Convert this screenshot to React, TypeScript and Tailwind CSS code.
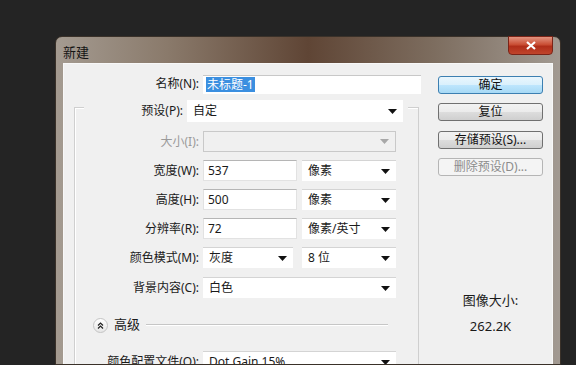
import React from 'react';

const font = "font-['Segoe_UI','Noto_Sans','Noto_Sans_CJK_SC',sans-serif]";

const Arrow = ({ disabled = false }: { disabled?: boolean }) => (
  <svg width="9" height="5" viewBox="0 0 9 5" className="shrink-0">
    <path d="M0 0h9L4.5 5z" fill={disabled ? '#a8a8a8' : '#111'} />
  </svg>
);

const Select = ({ value, w, disabled = false }: { value: string; w: string; disabled?: boolean }) => (
  <div
    className={`${w} h-[21px] flex items-center justify-between pl-[6px] pr-[6px] ${
      disabled
        ? 'bg-[#f0f0f0] border border-[#c9c9c9]'
        : 'bg-white border-t border-[#d4d4d4]'
    }`}
  >
    <span className="text-[12px] text-[#1a1a1a]">{value}</span>
    <Arrow disabled={disabled} />
  </div>
);

const Input = ({ value, w }: { value: string; w: string }) => (
  <div className={`${w} h-[21px] flex items-center pl-[4px] bg-white border border-[#e2e2e2] border-t-[#b5b5b5]`}>
    <span className="text-[12px] text-[#1a1a1a]">{value}</span>
  </div>
);

const Row = ({ label, children, mt, gap = 'gap-[5px]', disabled = false }: { label: string; children: React.ReactNode; mt: string; gap?: string; disabled?: boolean }) => (
  <div className={`${mt} flex items-center h-[21px]`}>
    <div className={`w-[124px] text-right text-[12px] ${disabled ? 'text-[#9a9a9a]' : 'text-[#1a1a1a]'}`}>{label}</div>
    <div className={`ml-[4px] flex ${gap}`}>{children}</div>
  </div>
);

const Btn = ({ label, kind = 'normal', mt }: { label: string; kind?: 'default' | 'normal' | 'disabled'; mt: string }) => {
  const cls =
    kind === 'default'
      ? 'border-[#3c7fb1] bg-[linear-gradient(#eaf6fd,#d9f0fc_50%,#bee6fd_50%,#a7d9f5)] text-[#111]'
      : kind === 'disabled'
      ? 'border-[#b5b5b5] bg-[#f4f4f4] text-[#8c8c8c]'
      : 'border-[#707070] bg-[linear-gradient(#f2f2f2,#ebebeb_50%,#dddddd_50%,#cfcfcf)] text-[#111]';
  return (
    <div className={`${mt} w-[105px] h-[18px] rounded-[3px] border flex items-center justify-center text-[12px] ${cls}`}>
      {label}
    </div>
  );
};

export default function App() {
  return (
    <div className={`w-[576px] h-[365px] overflow-hidden bg-[#242424] pt-[36px] pl-[55px] ${font}`}>
      <div className="w-[506px] h-[329px] rounded-t-[7px] border border-[#3a3129] bg-[linear-gradient(90deg,#a49b91_0%,#8a7a6b_22%,#5f4535_50%,#7d6d5f_75%,#a29a92_100%)] flex flex-col">
        {/* title bar */}
        <div className="h-[26px] flex justify-between shrink-0">
          <span className="ml-[7px] mt-[6px] text-[13px] text-[#151515]">新建</span>
          <div className="mr-[7px] -mt-px w-[45px] h-[19px] rounded-b-[4px] border border-[#7a2418] bg-[linear-gradient(#e39480,#c94d33_45%,#b02e19_55%,#c0452c)] flex items-center justify-center">
            <svg width="10" height="9" viewBox="0 0 10 9">
              <path d="M1 1l8 7M9 1L1 8" stroke="#fff" strokeWidth="2.2" />
            </svg>
          </div>
        </div>

        {/* content */}
        <div className="mx-[7px] flex-1 bg-[#f0f0f0] border-t border-l border-r border-[#f8f8f8] flex overflow-hidden">
          {/* left */}
          <div className="w-[362px]">
            <div className="mt-[11px] flex items-center h-[18px]">
              <div className="w-[135px] text-right text-[12px] text-[#1a1a1a]">名称(N):</div>
              <div className="ml-[4px] w-[218px] h-[19px] flex items-center pl-[3px] bg-white border-t border-[#c8c8c8]">
                <span className="text-[12px] bg-[#3b8fe0] text-white px-[1px] leading-[15px]">未标题-1</span>
              </div>
            </div>

            <div className="mt-[14px] ml-[10px] w-[345px] h-[300px] border border-[#cfcfcf] shadow-[inset_1px_1px_0_#fff]">
              <div className="-mt-[8px] ml-[9px] w-[324px] h-[22px] bg-[#f0f0f0] flex items-center">
                <div className="w-[99px] text-right text-[12px] text-[#1a1a1a]">预设(P):</div>
                <div className="ml-[4px] w-[216px] h-[22px] flex items-center justify-between px-[6px] bg-white">
                  <span className="text-[12px] text-[#1a1a1a]">自定</span>
                  <Arrow />
                </div>
              </div>

              <Row label="大小(I):" mt="mt-[9px]" disabled>
                <Select value="" w="w-[193px]" disabled />
              </Row>
              <Row label="宽度(W):" mt="mt-[8px]">
                <Input value="537" w="w-[94px]" />
                <Select value="像素" w="w-[94px]" />
              </Row>
              <Row label="高度(H):" mt="mt-[8px]">
                <Input value="500" w="w-[94px]" />
                <Select value="像素" w="w-[94px]" />
              </Row>
              <Row label="分辨率(R):" mt="mt-[8px]">
                <Input value="72" w="w-[94px]" />
                <Select value="像素/英寸" w="w-[94px]" />
              </Row>
              <Row label="颜色模式(M):" mt="mt-[8px]" gap="gap-[9px]">
                <Select value="灰度" w="w-[90px]" />
                <Select value="8 位" w="w-[94px]" />
              </Row>
              <Row label="背景内容(C):" mt="mt-[9px]">
                <Select value="白色" w="w-[193px]" />
              </Row>

              <div className="mt-[19px] h-[16px] flex items-center pl-[18px] pr-[30px]">
                <div className="w-[15px] h-[15px] rounded-full border border-[#c4c4c4] bg-[linear-gradient(#ffffff,#e6e6e6)] flex items-center justify-center">
                  <svg width="7" height="7" viewBox="0 0 7 7">
                    <path d="M1 3.5l2.5-2.5 2.5 2.5M1 6.5l2.5-2.5 2.5 2.5" stroke="#222" strokeWidth="1.2" fill="none" />
                  </svg>
                </div>
                <span className="ml-[6px] text-[13px] text-[#1a1a1a]">高级</span>
                <div className="ml-[6px] flex-1 h-[2px] border-t border-[#c6c6c6] border-b border-b-white" />
              </div>

              <Row label="颜色配置文件(O):" mt="mt-[18px]">
                <Select value="Dot Gain 15%" w="w-[193px]" />
              </Row>
            </div>
          </div>

          {/* right */}
          <div className="ml-[12px] w-[105px] flex flex-col">
            <Btn label="确定" kind="default" mt="mt-[12px]" />
            <Btn label="复位" mt="mt-[9px]" />
            <Btn label="存储预设(S)..." mt="mt-[10px]" />
            <Btn label="删除预设(D)..." kind="disabled" mt="mt-[9px]" />
            <div className="mt-[115px] text-center text-[13px] text-[#1a1a1a]">图像大小:</div>
            <div className="mt-[6px] text-center text-[13px] text-[#1a1a1a]">262.2K</div>
          </div>
        </div>
      </div>
    </div>
  );
}
